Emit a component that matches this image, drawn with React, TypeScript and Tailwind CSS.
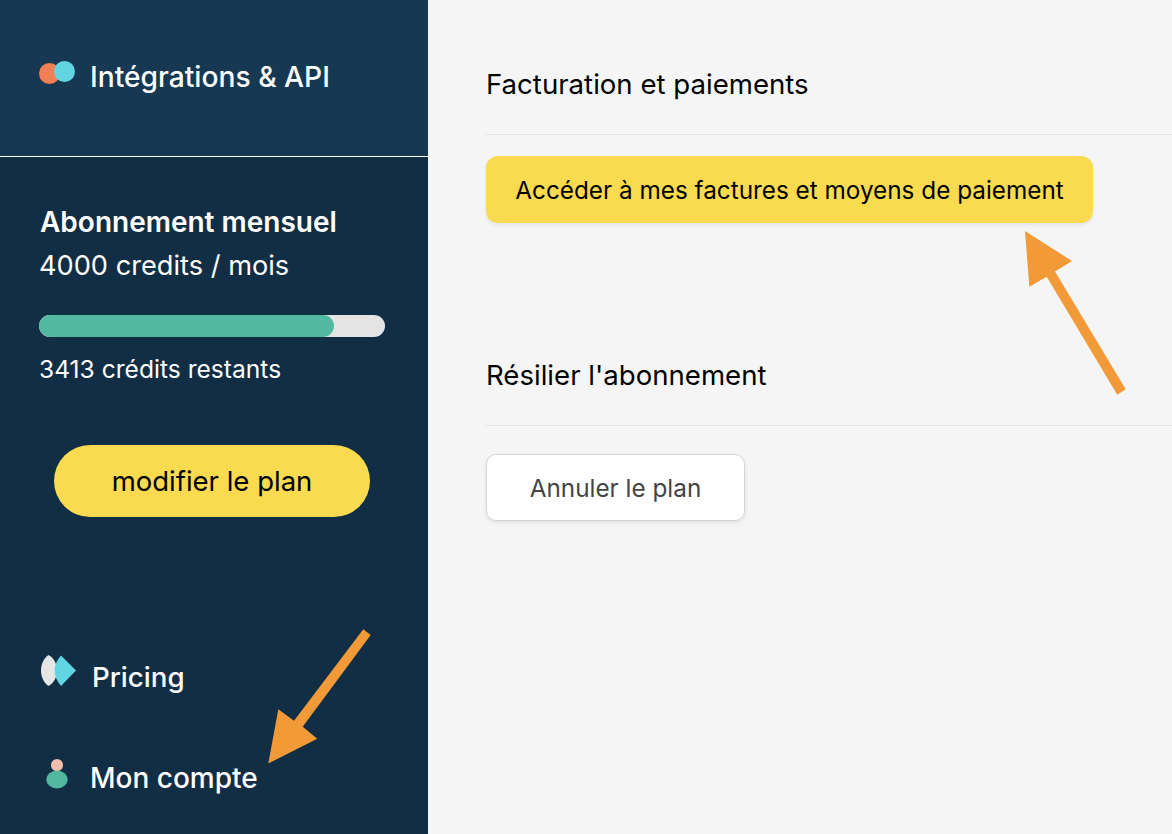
const font = { fontFamily: "Inter, sans-serif" };

const Arrows = () => (
  <svg className="pointer-events-none absolute inset-0" width="1172" height="834" viewBox="0 0 1172 834">
    <polygon
      fill="#f29a38"
      points="1025,231 1072,261 1055,271.5 1125.7,389.3 1117.3,394.7 1046.7,276.7 1029.3,286.7"
    />
    <polygon
      fill="#f29a38"
      points="363.3,629.3 370.7,635 302.7,726.7 317.3,738.7 268.3,763.5 278.3,709.3 294,720.7"
    />
  </svg>
);

const App = () => {
  return (
    <div className="relative flex h-[834px] w-[1172px] overflow-hidden bg-[#f5f5f5]" style={font}>
      {/* Sidebar */}
      <aside className="flex h-full w-[428px] flex-col bg-[#122e45] text-white">
        <div className="flex h-[157px] items-start gap-[15px] border-b border-white bg-[#163852] pl-[39px] pt-[61px]">
          <svg width="36" height="23" viewBox="0 0 36 23">
            <circle cx="10.5" cy="12.5" r="10.5" fill="#f07f56" />
            <circle cx="25.5" cy="10.5" r="10.5" fill="#62d5e3" />
          </svg>
          <span className="text-[28.2px] leading-[32px] font-medium">Intégrations &amp; API</span>
        </div>

        <div className="px-[39px] pt-[48px]">
          <p className="pl-px text-[28px] leading-[34px] font-semibold">Abonnement mensuel</p>
          <p className="mt-[10px] text-[27.2px] leading-[34px]">4000 credits / mois</p>
          <div className="mt-[32px] h-[22px] w-[346px] overflow-hidden rounded-full bg-[#e4e4e4]">
            <div className="h-full w-[295px] rounded-full bg-[#53b8a0]" />
          </div>
          <p className="mt-[17px] text-[24.6px] leading-[30px]">3413 crédits restants</p>
          <button className="mt-[61px] ml-[15px] flex h-[72px] w-[316px] items-center justify-center rounded-full bg-[#fadb4f] pt-px text-[27.5px] text-black">
            modifier le plan
          </button>
        </div>

        <nav className="mt-auto pb-[39px] pl-[41px]">
          <div className="flex items-start gap-[16px]">
            <svg width="35" height="31" viewBox="0 0 35 31">
              <path d="M7.5 0 C3 3 0 9 0 15.5 C0 22 3 28 7.5 31 C13 28 16 22 16 15.5 C16 9 13 3 7.5 0 Z" fill="#e6e6e6" />
              <path d="M20 .5 L35 15.5 L20 31 C16 26 13.5 21 13.5 15.5 C13.5 10 16 5 20 .5 Z" fill="#62d5e3" />
            </svg>
            <span className="mt-[5px] text-[27.7px] leading-[34px] font-medium">Pricing</span>
          </div>
          <div className="mt-[65px] flex items-start gap-[22px] pl-[5px]">
            <svg width="22" height="30" viewBox="0 0 22 30">
              <ellipse cx="11" cy="6.2" rx="6" ry="6.2" fill="#f3bfae" />
              <ellipse cx="11" cy="20.5" rx="10.7" ry="9" fill="#53b8a0" />
            </svg>
            <span className="mt-[2px] text-[28px] leading-[34px] font-medium">Mon compte</span>
          </div>
        </nav>
      </aside>

      {/* Main */}
      <main className="flex-1 pt-[67px] pl-[58px]">
        <h2 className="border-b border-[#e4e4e4] pb-[33px] text-[27.6px] leading-[34px] font-normal text-black">
          Facturation et paiements
        </h2>
        <button className="mt-[21px] flex h-[67px] w-[607px] items-center justify-center rounded-[12px] bg-[#fadb4f] pt-[2px] text-[24.3px] text-black shadow-[0_2px_4px_rgba(0,0,0,0.08)]">
          Accéder à mes factures et moyens de paiement
        </button>
        <h2 className="mt-[135px] border-b border-[#e4e4e4] pb-[33px] text-[27.6px] leading-[34px] font-normal text-black">
          Résilier l'abonnement
        </h2>
        <button className="mt-[28px] flex h-[67px] w-[259px] items-center justify-center rounded-[10px] border border-[#d4d4d4] bg-white pt-px text-[24.3px] text-[#444444] shadow-[0_2px_4px_rgba(0,0,0,0.08)]">
          Annuler le plan
        </button>
      </main>

      <Arrows />
    </div>
  );
};

export default App;
